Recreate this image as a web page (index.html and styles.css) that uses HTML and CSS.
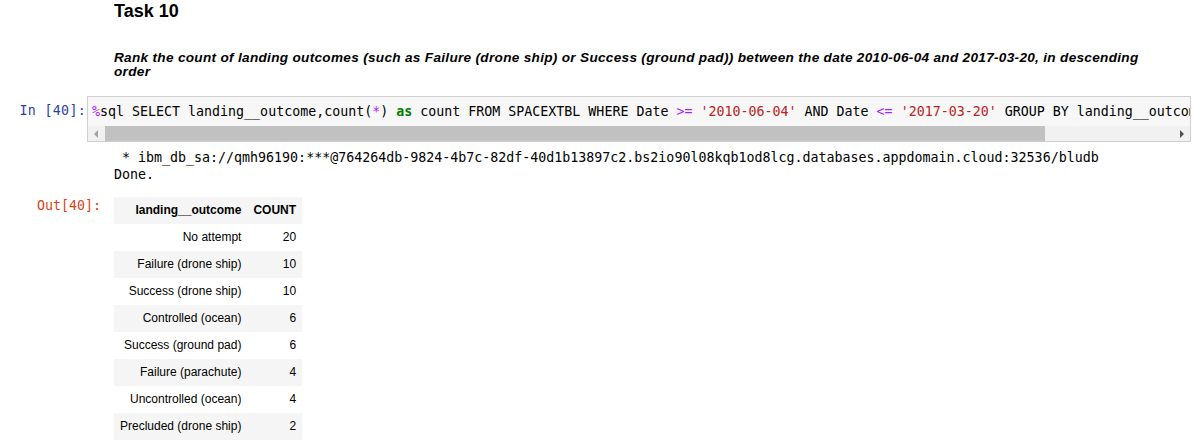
FILE: index.html
```html
<!DOCTYPE html>
<html>
<head>
<meta charset="utf-8">
<link rel="stylesheet" href="styles.css">
</head>
<body>
<div class="md">
  <h3 class="md-title">Task 10</h3>
  <p class="md-text"><em>Rank the count of landing outcomes (such as Failure (drone ship) or Success (ground pad)) between the date 2010-06-04 and 2017-03-20, in descending order</em></p>
</div>

<div class="in-row">
  <div class="in-prompt">In&nbsp;[40]:</div>
  <div class="in-box">
    <div class="code"><span class="op">%</span>sql SELECT landing__outcome,count(<span class="op">*</span>) <span class="kw">as</span> count FROM SPACEXTBL WHERE Date <span class="op">&gt;=</span> <span class="str">'2010-06-04'</span> AND Date <span class="op">&lt;=</span> <span class="str">'2017-03-20'</span> GROUP BY landing__outcome ORDER BY count DESC;</div>
    <div class="hscroll">
      <div class="arrow">
        <svg width="5" height="8" viewBox="0 0 5 8"><path d="M4 0 L0 4 L4 8 Z" fill="#a3a3a3"/></svg>
      </div>
      <div class="track"><div class="thumb"></div></div>
      <div class="arrow">
        <svg width="5" height="8" viewBox="0 0 5 8"><path d="M1 0 L5 4 L1 8 Z" fill="#505050"/></svg>
      </div>
    </div>
  </div>
</div>

<pre class="stream"> * ibm_db_sa://qmh96190:***@764264db-9824-4b7c-82df-40d1b13897c2.bs2io90l08kqb1od8lcg.databases.appdomain.cloud:32536/bludb
Done.</pre>

<div class="out-row">
  <div class="out-prompt">Out[40]:</div>
  <table class="result">
    <tr><th>landing__outcome</th><th>COUNT</th></tr>
    <tr><td>No attempt</td><td>20</td></tr>
    <tr><td>Failure (drone ship)</td><td>10</td></tr>
    <tr><td>Success (drone ship)</td><td>10</td></tr>
    <tr><td>Controlled (ocean)</td><td>6</td></tr>
    <tr><td>Success (ground pad)</td><td>6</td></tr>
    <tr><td>Failure (parachute)</td><td>4</td></tr>
    <tr><td>Uncontrolled (ocean)</td><td>4</td></tr>
    <tr><td>Precluded (drone ship)</td><td>2</td></tr>
  </table>
</div>
</body>
</html>
```

FILE: styles.css
```css
html, body {
  margin: 0;
  padding: 0;
  background: #ffffff;
  color: #000000;
  font-family: "Liberation Sans", Arial, sans-serif;
  overflow: hidden;
}

.md {
  padding-left: 114px;
}

.md-title {
  margin: 0;
  padding-top: 1px;
  font-size: 18px;
  line-height: 20px;
  font-weight: bold;
}

.md-text {
  margin: 29.5px 0 0 0;
  width: 1045px;
  font-size: 13.6px;
  letter-spacing: 0.3px;
  line-height: 14.5px;
  font-weight: bold;
}

.in-row {
  display: flex;
  margin-top: 16.5px;
}

.in-prompt,
.out-prompt,
.code,
.stream {
  font-family: "DejaVu Sans Mono", "Liberation Mono", monospace;
  font-size: 13.3px;
  line-height: 17px;
}

.in-prompt {
  width: 86px;
  flex: none;
  padding-right: 1px;
  padding-top: 6px;
  text-align: right;
  color: #303f9f;
  letter-spacing: 0.3px;
}

.in-box {
  flex: 1;
  min-width: 0;
  margin-right: 4px;
  border: 1px solid #cfcfcf;
  background: #f7f7f7;
}

.code {
  padding: 6px 0 6px 4px;
  white-space: pre;
  overflow: hidden;
  color: #000000;
}

.op { color: #aa22ff; }
.kw { color: #008000; font-weight: bold; }
.str { color: #ba2121; }

.hscroll {
  display: flex;
  height: 15px;
  background: #f1f1f1;
}

.arrow {
  width: 17px;
  flex: none;
  display: flex;
  align-items: center;
  justify-content: center;
}

.track {
  flex: 1;
  display: flex;
  align-items: stretch;
}

.thumb {
  width: 88%;
  background: #c1c1c1;
}

.stream {
  margin: 7px 0 0 0;
  padding-left: 114px;
  color: #000000;
}

.out-row {
  display: flex;
  margin-top: 14px;
}

.out-prompt {
  width: 101px;
  padding-right: 13px;
  flex: none;
  text-align: right;
  color: #d84315;
}

.result {
  border-collapse: collapse;
  border-spacing: 0;
  font-family: "Liberation Sans", Arial, sans-serif;
  font-size: 12px;
  color: #000000;
}

.result th,
.result td {
  padding: 6px 6px;
  line-height: 15px;
  text-align: right;
  white-space: nowrap;
}

.result th {
  font-weight: bold;
}

.result tr:nth-child(odd) {
  background: #f5f5f5;
}
```
